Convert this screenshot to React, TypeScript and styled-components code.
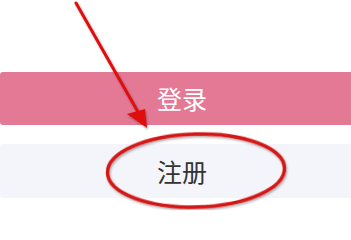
import React from "react";
import styled, { createGlobalStyle } from "styled-components";

const GlobalStyle = createGlobalStyle`
  html, body {
    margin: 0;
    padding: 0;
    background: #ffffff;
  }
  body {
    font-family: "Noto Sans CJK SC", "Noto Sans", sans-serif;
  }
`;

const Page = styled.div`
  position: relative;
  width: 351px;
  height: 210px;
  overflow: hidden;
  display: flex;
  flex-direction: column;
  gap: 19px;
  padding-top: 72px;
  box-sizing: border-box;
`;

const ActionButton = styled.button<{ $primary?: boolean }>`
  display: flex;
  align-items: center;
  justify-content: center;
  width: 364px;
  height: ${(p) => (p.$primary ? "53px" : "54px")};
  margin: 0;
  padding: 0;
  border: none;
  border-radius: 3px 0 0 3px;
  background: ${(p) => (p.$primary ? "#e47996" : "#f4f5fa")};
  color: ${(p) => (p.$primary ? "#ffffff" : "#333333")};
  font-family: "Noto Sans CJK SC", "Noto Sans", sans-serif;
  font-size: 25px;
  line-height: 1;
  flex-shrink: 0;
  cursor: pointer;
`;

const Annotation = styled.svg`
  position: absolute;
  left: 0;
  top: 0;
  width: 351px;
  height: 210px;
  pointer-events: none;
`;

const App: React.FC = () => {
  return (
    <>
      <GlobalStyle />
      <Page>
        <ActionButton $primary>登录</ActionButton>
        <ActionButton>注册</ActionButton>
        <Annotation viewBox="0 0 351 210">
          <defs>
            <filter id="shadow" x="-20%" y="-20%" width="140%" height="140%">
              <feDropShadow dx="1" dy="1.5" stdDeviation="1.2" floodColor="#000" floodOpacity="0.35" />
            </filter>
          </defs>
          <g filter="url(#shadow)">
            <line x1="76" y1="3" x2="138" y2="112" stroke="#e01010" strokeWidth="3" strokeLinecap="round" />
            <polygon points="147,128 127,114 145,109" fill="#e01010" />
            <ellipse
              cx="196"
              cy="170.5"
              rx="88.5"
              ry="36.5"
              fill="none"
              stroke="#d41414"
              strokeWidth="3.4"
              transform="rotate(-1.5 196 170.5)"
            />
          </g>
        </Annotation>
      </Page>
    </>
  );
};

export default App;
